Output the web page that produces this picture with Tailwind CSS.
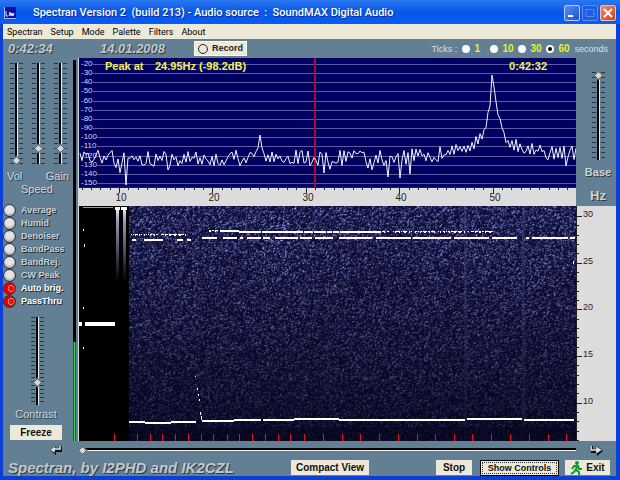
<!DOCTYPE html>
<html lang="en">
<head>
    <meta charset="UTF-8">
    <meta name="viewport" content="width=device-width, initial-scale=1.0">
    <title>Spectran Version 2</title>
    <script src="https://cdn.jsdelivr.net/npm/@tailwindcss/browser@4"></script>
</head>
<body class="flex min-h-screen flex-col overflow-x-hidden bg-[#0a3fd8] font-['Liberation_Sans',Arial,sans-serif]">

    <!-- Title bar -->
    <header class="flex h-6 items-center bg-linear-to-b from-[#2a78f0] via-[#0657e8] to-[#0a5cf5] pt-[2px] pr-1 pl-1">
        <svg class="h-3 w-3" viewBox="0 0 12 12" aria-hidden="true">
            <rect width="12" height="12" fill="#a9b8dc"/>
            <rect x="1" width="11" height="11" fill="#0b11a8"/>
            <path d="M2 4v5h2M5 9l1-4 1 4 1-3 1 3 1-3" fill="none" stroke="#dfe6ff"/>
        </svg>
        <h1 class="ml-[17px] flex-1 text-[11px] leading-4 font-medium whitespace-pre text-white [font-family:Roboto,sans-serif] [text-shadow:1px_1px_0_#0a2a90]">Spectran Version 2  (build 213) - Audio source  :  SoundMAX Digital Audio</h1>
        <div class="flex gap-[2px]">
            <button aria-label="Minimize" class="flex h-4 w-4 items-center justify-center rounded-xs border border-[#b9cdf8] bg-linear-to-br from-[#5c8ff5] to-[#1c4fd0]">
                <svg class="h-3 w-3" viewBox="0 0 12 12"><path d="M2 9h5" stroke="#fff" stroke-width="2"/></svg>
            </button>
            <button aria-label="Maximize" class="flex h-4 w-4 items-center justify-center rounded-xs border border-[#5f8ff0] bg-[#1f5be6]">
                <svg class="h-3 w-3" viewBox="0 0 12 12"><path d="M2 2.500h8v7H2z" fill="none" stroke="#5a8bf0"/></svg>
            </button>
            <button aria-label="Close" class="flex h-4 w-4 items-center justify-center rounded-xs border border-[#f0c4b8] bg-linear-to-br from-[#f08a6a] to-[#d03c18]">
                <svg class="h-3 w-3" viewBox="0 0 12 12"><path d="M2 2l8 8M10 2l-8 8" stroke="#fff" stroke-width="2"/></svg>
            </button>
        </div>
    </header>

    <div class="mr-1 mb-1 ml-[3px] flex flex-1 flex-col bg-[#627f93]">
        <!-- Menu -->
        <nav class="flex h-[15px] items-center gap-2 bg-[#ece9d8] pl-1 text-[9px] leading-3 text-black [font-family:Roboto,sans-serif]">
            <a href="#">Spectran</a>
            <a href="#">Setup</a>
            <a href="#">Mode</a>
            <a href="#">Palette</a>
            <a href="#">Filters</a>
            <a href="#">About</a>
        </nav>

        <!-- Clock, record, tick interval -->
        <div class="flex h-[19px] items-center">
            <span class="w-[97px] pl-[5px] text-[13px] leading-4 font-bold text-[#c4c8cc] italic [text-shadow:1px_1px_0_#2c3a44]">0:42:34</span>
            <span class="w-[94px] text-[13px] leading-4 font-bold text-[#c4c8cc] italic [text-shadow:1px_1px_0_#2c3a44]">14.01.2008</span>
            <button class="flex h-[15px] w-[53px] items-center justify-center gap-1 border border-[#fffef4] bg-[#ece9d8] text-[9px] font-bold text-[#222]">
                <span class="h-[10px] w-[10px] rounded-full border border-[#222]"></span>Record
            </button>
            <fieldset class="ml-auto flex items-center pr-2 text-[10px] leading-3 text-[#d9e0e6]">
                <span class="w-[31px] text-[9px]">Ticks :</span>
                <label class="flex w-7 items-center gap-1 font-bold text-[#eaf02a]"><input type="radio" name="ticks" class="h-2 w-2 appearance-none rounded-full border-2 border-white bg-white checked:bg-black">1</label>
                <label class="flex w-7 items-center gap-1 font-bold text-[#eaf02a]"><input type="radio" name="ticks" class="h-2 w-2 appearance-none rounded-full border-2 border-white bg-white checked:bg-black">10</label>
                <label class="flex w-7 items-center gap-1 font-bold text-[#eaf02a]"><input type="radio" name="ticks" class="h-2 w-2 appearance-none rounded-full border-2 border-white bg-white checked:bg-black">30</label>
                <label class="flex w-7 items-center gap-1 font-bold text-[#eaf02a]"><input type="radio" name="ticks" checked class="h-2 w-2 appearance-none rounded-full border-2 border-white bg-white checked:bg-black">60</label>
                <span class="text-[9px]">seconds</span>
            </fieldset>
        </div>

        <main class="flex flex-1">
            <!-- Left controls -->
            <aside class="flex w-[70px] flex-col pt-[5px]">
                <div class="flex gap-[9px] pl-[7px]">
                    <input type="range" value="0" aria-label="Vol" class="h-[101px] w-[13px] appearance-none [direction:rtl] [writing-mode:vertical-lr] bg-[linear-gradient(to_right,transparent_4px,#627f93_4px_5px,#000_5px_7px,#e4e8ea_7px_8px,#627f93_8px_9px,transparent_9px),repeating-linear-gradient(to_bottom,#26343f_0_1px,transparent_1px_5px)] [&::-webkit-slider-thumb]:h-[7px] [&::-webkit-slider-thumb]:w-[7px] [&::-webkit-slider-thumb]:appearance-none [&::-webkit-slider-thumb]:rotate-45 [&::-webkit-slider-thumb]:border [&::-webkit-slider-thumb]:border-[#50565a] [&::-webkit-slider-thumb]:bg-[#d8d8d8]">
                    <input type="range" value="13" aria-label="Speed" class="h-[101px] w-[13px] appearance-none [direction:rtl] [writing-mode:vertical-lr] bg-[linear-gradient(to_right,transparent_4px,#627f93_4px_5px,#000_5px_7px,#e4e8ea_7px_8px,#627f93_8px_9px,transparent_9px),repeating-linear-gradient(to_bottom,#26343f_0_1px,transparent_1px_5px)] [&::-webkit-slider-thumb]:h-[7px] [&::-webkit-slider-thumb]:w-[7px] [&::-webkit-slider-thumb]:appearance-none [&::-webkit-slider-thumb]:rotate-45 [&::-webkit-slider-thumb]:border [&::-webkit-slider-thumb]:border-[#50565a] [&::-webkit-slider-thumb]:bg-[#d8d8d8]">
                    <input type="range" value="13" aria-label="Gain" class="h-[101px] w-[13px] appearance-none [direction:rtl] [writing-mode:vertical-lr] bg-[linear-gradient(to_right,transparent_4px,#627f93_4px_5px,#000_5px_7px,#e4e8ea_7px_8px,#627f93_8px_9px,transparent_9px),repeating-linear-gradient(to_bottom,#26343f_0_1px,transparent_1px_5px)] [&::-webkit-slider-thumb]:h-[7px] [&::-webkit-slider-thumb]:w-[7px] [&::-webkit-slider-thumb]:appearance-none [&::-webkit-slider-thumb]:rotate-45 [&::-webkit-slider-thumb]:border [&::-webkit-slider-thumb]:border-[#50565a] [&::-webkit-slider-thumb]:bg-[#d8d8d8]">
                </div>
                <div class="mt-[6px] flex justify-between pr-1 pl-1 text-[11px] leading-[13px] text-[#d8dbde] [text-shadow:1px_1px_0_#2c3a44]">
                    <span>Vol</span><span>Gain</span>
                </div>
                <div class="pl-[18px] text-[11px] leading-[13px] text-[#d8dbde] [text-shadow:1px_1px_0_#2c3a44]">Speed</div>

                <div id="filters" class="mt-2 flex flex-col text-[9px] leading-[13px] font-bold text-[#ccd0d4] [text-shadow:1px_1px_0_#1c262e]"></div>

                <input type="range" value="23" aria-label="Contrast" class="mt-[9px] ml-7 h-[88px] w-[13px] appearance-none [direction:rtl] [writing-mode:vertical-lr] bg-[linear-gradient(to_right,transparent_4px,#627f93_4px_5px,#000_5px_7px,#e4e8ea_7px_8px,#627f93_8px_9px,transparent_9px),repeating-linear-gradient(to_bottom,#26343f_0_1px,transparent_1px_4px)] [&::-webkit-slider-thumb]:h-[7px] [&::-webkit-slider-thumb]:w-[7px] [&::-webkit-slider-thumb]:appearance-none [&::-webkit-slider-thumb]:rotate-45 [&::-webkit-slider-thumb]:border [&::-webkit-slider-thumb]:border-[#50565a] [&::-webkit-slider-thumb]:bg-[#d8d8d8]">
                <div class="mt-[3px] pr-1 text-center text-[11px] leading-[13px] text-[#d0d3d6] [text-shadow:1px_1px_0_#2c3a44]">Contrast</div>
                <button class="mt-1 ml-[7px] h-[15px] w-[52px] bg-[#ece9d8] text-[10px] leading-3 font-bold text-[#111]">Freeze</button>
            </aside>

            <!-- Level meter -->
            <div class="flex w-[6px] flex-col border-r border-[#d4dade]">
                <div class="mt-[2px] flex w-[3px] flex-1 flex-col justify-end bg-black">
                    <div class="h-[99px] border-x border-[#0c6a18] bg-[#35d848]"></div>
                </div>
            </div>

            <!-- Spectrum and waterfall -->
            <section class="flex min-w-0 flex-1 flex-col">
                <div class="relative h-[129px] bg-[#000060]">
                    <svg id="spectrum" class="block h-full w-full" viewBox="0 0 497 129" preserveAspectRatio="none"></svg>
                    <div id="dbLabels" class="absolute inset-y-0 left-[2px] text-[8px] leading-2 text-[#d4d8f0]"></div>
                    <div class="absolute inset-x-0 top-[2px] flex pr-[29px] pl-[26px] text-[11px] leading-3 font-bold text-[#f4f44c]">
                        <span class="w-[50px]">Peak at</span>
                        <span>24.95Hz (-98.2dB)</span>
                        <span class="ml-auto">0:42:32</span>
                    </div>
                </div>
                <div class="relative h-[19px] bg-[#dcdcdc]">
                    <svg id="hzTicks" class="block h-full w-full" viewBox="0 0 497 19" preserveAspectRatio="none"></svg>
                    <div id="hzLabels" class="absolute inset-x-0 top-[5px] text-[10px] leading-3 text-[#222]"></div>
                </div>
                <div class="relative flex-1 bg-black">
                    <canvas id="waterfall" width="497" height="235" class="absolute inset-0 h-full w-full"></canvas>
                </div>
            </section>

            <!-- Base and vertical scale -->
            <aside class="flex w-[40px] flex-col">
                <div class="flex h-[148px] flex-col items-center pt-[14px] pl-1 text-[#d0d3d6] [text-shadow:1px_1px_0_#2c3a44]">
                    <input id="base" type="range" value="100" class="h-[88px] w-[13px] appearance-none [direction:rtl] [writing-mode:vertical-lr] bg-[linear-gradient(to_right,transparent_4px,#627f93_4px_5px,#000_5px_7px,#e4e8ea_7px_8px,#627f93_8px_9px,transparent_9px),repeating-linear-gradient(to_bottom,#26343f_0_1px,transparent_1px_5px)] [&::-webkit-slider-thumb]:h-[7px] [&::-webkit-slider-thumb]:w-[7px] [&::-webkit-slider-thumb]:appearance-none [&::-webkit-slider-thumb]:rotate-45 [&::-webkit-slider-thumb]:border [&::-webkit-slider-thumb]:border-[#50565a] [&::-webkit-slider-thumb]:bg-[#d8d8d8]">
                    <label for="base" class="mt-[6px] text-[11px] leading-[13px] font-bold">Base</label>
                    <span class="mt-[9px] text-[13px] leading-4 font-bold">Hz</span>
                </div>
                <div class="relative flex-1 border-l border-[#222] bg-[#dcdcdc]">
                    <svg id="fallTicks" class="absolute inset-y-0 left-0 h-full w-[6px]" viewBox="0 0 6 235" preserveAspectRatio="none"></svg>
                    <div id="fallLabels" class="absolute inset-y-0 left-[6px] text-[9px] leading-3 text-[#222]"></div>
                </div>
            </aside>
        </main>

        <!-- Time scroll -->
        <div class="flex h-[18px] items-center">
            <button aria-label="Scroll left" class="flex w-[76px] justify-center pl-[30px]">
                <svg class="h-3 w-[14px]" viewBox="0 0 14 12">
                    <path d="M13 2v6H7v3L2 7l5-4v3h3V2z" fill="#0c1014"/>
                    <path d="M12 1v5H6v3L1 6l5-4v2h4V1z" fill="#dfe3e6" stroke="#222" stroke-width=".5"/>
                </svg>
            </button>
            <input type="range" value="0" aria-label="Scroll" class="h-2 min-w-0 flex-1 appearance-none bg-[linear-gradient(to_bottom,transparent_2px,#000_2px_4px,#f0f0f0_4px_5px,transparent_5px)] [&::-webkit-slider-thumb]:h-[7px] [&::-webkit-slider-thumb]:w-[7px] [&::-webkit-slider-thumb]:appearance-none [&::-webkit-slider-thumb]:rotate-45 [&::-webkit-slider-thumb]:border [&::-webkit-slider-thumb]:border-[#50565a] [&::-webkit-slider-thumb]:bg-[#d8d8d8]">
            <button aria-label="Scroll right" class="flex w-[40px] justify-center">
                <svg class="h-3 w-[14px]" viewBox="0 0 14 12">
                    <path d="M2 2v7h6v3l6-5-5-4v3H4V2z" fill="#0c1014"/>
                    <path d="M1 1v6h6v3l6-4-6-4v3H3V1z" fill="#dfe3e6" stroke="#222" stroke-width=".5"/>
                </svg>
            </button>
        </div>

        <!-- Bottom buttons -->
        <footer class="flex h-[17px] items-center pr-[6px] pl-[5px] text-[10px] leading-3 font-bold text-[#111]">
            <div class="w-[283px] text-[15px] leading-4 text-[#c4c8cc] italic [text-shadow:1px_1px_0_#2c3a44]">Spectran, by I2PHD and IK2CZL</div>
            <button class="h-[15px] w-[78px] bg-[#ece9d8]">Compact View</button>
            <button class="ml-auto h-[15px] w-9 bg-[#ece9d8]">Stop</button>
            <button class="ml-2 h-4 w-[79px] border border-black bg-[#ece9d8] p-px text-[9px]">
                <span class="block border border-dotted border-[#333] leading-[10px]">Show Controls</span>
            </button>
            <button class="ml-[6px] flex h-[15px] w-[45px] items-center justify-center gap-1 bg-[#ece9d8]">
                <svg class="h-[14px] w-3" viewBox="0 0 12 14" fill="none" stroke="#0f9a35" stroke-width="2">
                    <circle cx="7" cy="2" r="1" fill="#0f9a35"/>
                    <path d="M7 4L6 9l3 2v3M6 8l-2 3-3 2M2 8l2-3h4l1 3h3"/>
                </svg>
                Exit
            </button>
        </footer>
    </div>

    <script>
        // repeatable noise
        let seed = 213;
        const rnd = () => {
            seed = (seed * 1664525 + 1013904223) % 4294967296;
            return seed / 4294967296;
        };

        // filter switches
        const filters = [
            ['Average', false], ['Humid', false], ['Denoiser', false], ['BandPass', false],
            ['BandRej.', false], ['CW Peak', false], ['Auto brig.', true], ['PassThru', true]
        ];
        document.getElementById('filters').innerHTML = filters.map(([name, on]) => `
            <label class="flex items-center gap-[5px] ${on ? 'text-white' : ''}">
                <input type="checkbox" ${on ? 'checked' : ''} class="h-[13px] w-[13px] appearance-none rounded-full border border-[#26343f] bg-[radial-gradient(circle_at_50%_40%,#e4e4e4_40%,#a8a8a8_75%)] checked:bg-[radial-gradient(circle_at_65%_50%,#f01010_28%,#ffb0b0_32%,#e80000_42%)]">${name}
            </label>`).join('');

        // spectrum trace
        const xOf = hz => 40 + (hz - 10) * 9.34;
        let grid = '';
        let dbLabels = '';
        for (let i = 0; i < 14; i++) {
            const y = 6 + Math.round(i * 9.15);
            grid += `M${i < 8 ? 14 : 18} ${y}.5H497`;
            dbLabels += `<div class="absolute -translate-y-1/2" style="top:${y}px">-${20 + i * 10}</div>`;
        }
        const dips = { 46: 127, 88: 112, 180: 77, 244: 115, 308: 119, 320: 120, 330: 116, 486: 108 };
        let trace = '';
        for (let i = 0; i < 249; i++) {
            const x = i * 2;
            const d = Math.abs(x - 413);
            const side = rnd() < 0.8 ? (i % 2 ? 1 : -1) : (i % 2 ? -1 : 1);
            let y = (x < 330 ? 100 : x < 390 ? 96 : 94) + side * rnd() * 8;
            if (rnd() < 0.06) y += 8;
            if (d < 50) y = Math.min(y, 98) - 10 * Math.exp(-d / 22) - 68 * Math.exp(-d / 6);
            if (x === 412) y = 17;
            if (x === 178 || x === 182) y = 90;
            else if (dips[x]) y = dips[x];
            trace += `${x ? 'L' : 'M'}${x + 1} ${y.toFixed(1)}`;
        }
        document.getElementById('spectrum').innerHTML = `
            <path d="${grid}" stroke="#5c5ca4"/>
            <path d="M236 0V129" stroke="#a80c30" stroke-width="2"/>
            <path d="${trace}" fill="none" stroke="#f2f5ff" stroke-width="1"/>`;
        document.getElementById('dbLabels').innerHTML = dbLabels;

        // horizontal scale
        let hzTicks = '';
        let hzLabels = '';
        for (let hz = 6; hz < 59; hz++) {
            const x = Math.round(xOf(hz));
            hzTicks += `M${x}.5 0V${hz % 10 ? 3 : 6}`;
            if (hz % 10 === 0) {
                hzLabels += `<span class="absolute -translate-x-1/2" style="left:${(x + 2) / 4.97}%">${hz}</span>`;
            }
        }
        document.getElementById('hzTicks').innerHTML = `<path d="M0 .5H497${hzTicks}" stroke="#222"/>`;
        document.getElementById('hzLabels').innerHTML = hzLabels;

        // vertical scale
        let fallTicks = '';
        let fallLabels = '';
        for (let hz = 6; hz <= 30; hz++) {
            const y = Math.round(10 + (30 - hz) * 9.33);
            fallTicks += `M0 ${y}.5H${hz % 5 ? 2 : 5}`;
            if (hz % 5 === 0) {
                fallLabels += `<span class="absolute -translate-y-1/2" style="top:${(y - 2) / 2.35}%">${hz}</span>`;
            }
        }
        document.getElementById('fallTicks').innerHTML = `<path d="${fallTicks}" stroke="#222"/>`;
        document.getElementById('fallLabels').innerHTML = fallLabels;

        // waterfall, each grain bleeds into its right and lower neighbours
        const ctx = document.getElementById('waterfall').getContext('2d');
        const img = ctx.createImageData(497, 235);
        const above = new Float32Array(498);
        for (let y = 0; y < 235; y++) {
            let prev = 0;
            const level = y > 220 ? 0.15 : 1 - 0.75 * (y / 235);
            for (let x = 0; x < 497; x++) {
                const p = (y * 497 + x) * 4;
                img.data[p + 3] = 255;
                if (x < 50) continue;
                const grain = Math.pow(rnd(), 5);
                const v = grain * 0.6 + prev * 0.35 + above[x] * 0.3;
                prev = grain;
                above[x] = grain;
                let s = v * level;
                if (x > 180 && x < 220 && y < 90) s *= 1.2;
                if ((x > 384 && x < 388) || (x > 442 && x < 446)) s = s * 0.6 + 0.2 * level;
                img.data[p] = 3 + level * 8 + s * 135;
                img.data[p + 1] = 3 + level * 8 + s * 140;
                img.data[p + 2] = 24 + level * 30 + s * 180;
            }
        }
        ctx.putImageData(img, 0, 0);

        // start-up columns
        const fade = ctx.createLinearGradient(0, 0, 0, 75);
        fade.addColorStop(0, '#fff');
        fade.addColorStop(0.2, '#9898b8');
        fade.addColorStop(1, '#000');
        ctx.fillStyle = fade;
        ctx.fillRect(37, 2, 3, 75);
        ctx.fillRect(44, 2, 3, 75);
        ctx.fillStyle = '#fff';
        ctx.fillRect(36, 1, 5, 3);
        ctx.fillRect(42, 1, 6, 3);
        ctx.fillStyle = '#9a9aa8';
        ctx.fillRect(4, 1, 30, 1);

        // carriers: x start, x end, y
        ctx.fillStyle = '#fff';
        ctx.fillRect(0, 116, 3, 4);
        ctx.fillRect(6, 116, 30, 4);
        const dashes = [
            [53, 57, 33], [65, 84, 33], [98, 104, 33], [108, 112, 33],
            [123, 138, 31], [144, 158, 31], [161, 164, 31], [168, 182, 31], [184, 191, 31], [196, 219, 31],
            [221, 233, 31], [236, 254, 31], [260, 293, 31], [297, 332, 31], [334, 372, 31], [375, 410, 31],
            [413, 438, 31], [447, 450, 31], [453, 489, 31], [491, 496, 31]
        ];
        dashes.forEach(([a, b, y]) => ctx.fillRect(a, y, b - a, 2));
        for (let x = 51; x < 415; x++) {
            const strong = x > 140 && x < 300;
            if (x > 112 && x < 128) continue;
            if (rnd() < (strong ? 0.95 : 0.65)) ctx.fillRect(x, x < 112 ? 28 : x < 160 ? 24 : 25, 1, strong || x % 5 < 2 ? 2 : 1);
        }
        [[50, 66, 215], [66, 92, 216], [92, 117, 215], [123, 155, 214], [155, 182, 213], [184, 215, 213], [215, 260, 212], [260, 386, 213], [388, 443, 212], [445, 495, 213]]
            .forEach(([a, b, y]) => ctx.fillRect(a, y, b - a, 2));
        [[116, 170, 1], [118, 182, 2], [120, 193, 2], [121, 206, 3], [119, 188, 2], [122, 210, 4], [4, 23, 2], [5, 38, 3], [4, 101, 2], [4, 141, 2], [494, 55, 3]]
            .forEach(([x, y, h]) => ctx.fillRect(x, y, 1, h));

        // minute ticks
        ctx.fillStyle = '#e81020';
        [35, 58, 71, 83, 96, 109, 122, 134, 148, 160, 173, 186, 199, 211, 225, 244, 263, 281, 300, 319, 338, 356, 375, 393, 412, 431, 450, 469, 487]
            .forEach(x => ctx.fillRect(x, 228, 1, 7));
    </script>
</body>
</html>
